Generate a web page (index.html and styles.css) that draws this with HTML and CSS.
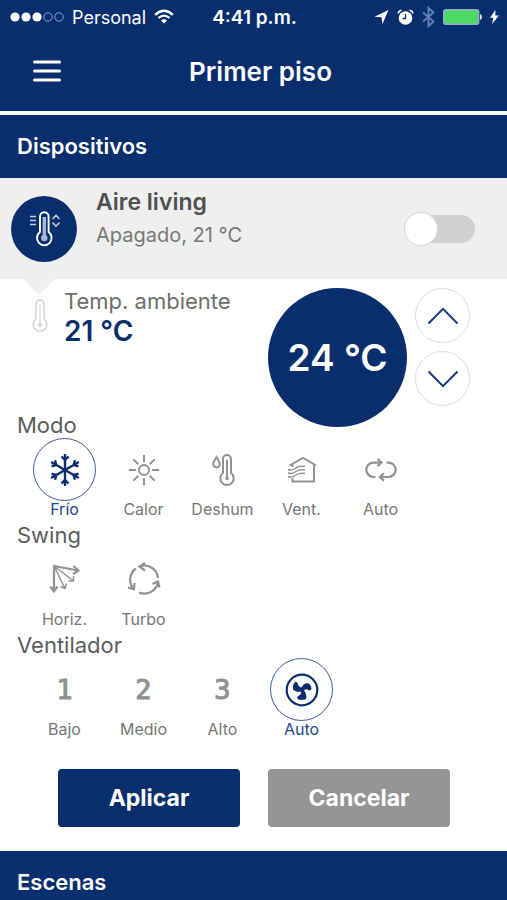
FILE: index.html
```html
<!DOCTYPE html>
<html lang="es">
<head>
<meta charset="utf-8">
<meta name="viewport" content="width=device-width, initial-scale=1">
<title>Primer piso</title>
<link rel="stylesheet" href="styles.css">
</head>
<body>
<div class="status">
  <div class="status-left">
    <svg width="54" height="12" viewBox="0 0 54 12" fill="#fff" aria-hidden="true"><circle cx="5" cy="6" r="4.6"/><circle cx="16" cy="6" r="4.6"/><circle cx="27" cy="6" r="4.6"/><g fill="none" stroke="#8fa3cb"><circle cx="38" cy="6" r="4.2"/><circle cx="49" cy="6" r="4.2"/></g></svg>
    <span>Personal</span>
    <svg width="20" height="16" viewBox="0 0 20 16" fill="none" stroke="#fff" stroke-width="2.3" aria-hidden="true"><path d="M1.2 5.8Q10-2.2 18.800 5.800M4.500 9Q10 4.200 15.500 9"/><path d="M10 14.500 7 11.500Q10 9.200 13 11.500Z" fill="#fff" stroke="none"/></svg>
  </div>
  <span class="clock">4:41 p.m.</span>
  <div class="status-right">
    <svg width="15" height="16" viewBox="0 0 15 16" fill="#fff" aria-hidden="true"><path d="M14.500 1 8.500 15 7.500 8.200.500 7.800Z"/></svg>
    <svg width="17" height="17" viewBox="0 0 17 17" aria-hidden="true"><circle cx="8.500" cy="9" r="6.800" fill="#fff"/><path d="M1.200 4.500Q1.500 1.500 4.500 1.200M15.800 4.500Q15.500 1.500 12.500 1.200" fill="none" stroke="#fff" stroke-width="1.500"/><path d="M8.500 5v4.500H5.500" fill="none" stroke="#092e6e" stroke-width="1.300"/></svg>
    <svg width="13" height="20" viewBox="0 0 13 20" fill="none" stroke="#667fb0" stroke-width="1.900" aria-hidden="true"><path d="M1 5.500 11.500 14.500 6.500 19V1L11.500 5.500 1 14.500"/></svg>
    <svg width="39" height="16" viewBox="0 0 39 16" aria-hidden="true"><rect x=".7" y=".7" width="35" height="14.600" rx="2" fill="#4cd964" stroke="#9aaccd" stroke-width="1.400"/><path d="M37 5q2 .500 2 3t-2 3z" fill="#dbe3f0"/></svg>
    <svg width="9" height="16" viewBox="0 0 9 16" fill="#fff" aria-hidden="true"><path d="M5.500 1 0 8.800h3.400L2 15l7-8.400H5.200Z"/></svg>
  </div>
</div>

<header class="header">
  <button class="menu" aria-label="Menú">
    <svg width="30" height="24" viewBox="0 0 30 24" stroke="#fff" stroke-width="3" stroke-linecap="round"><path d="M2.500 3h25M2.500 12h25M2.500 21h25"/></svg>
  </button>
  <h1>Primer piso</h1>
</header>

<main>
  <h2 class="bar">Dispositivos</h2>
  <section class="device">
    <div class="device-icon">
      <svg width="32" height="38" viewBox="0 0 32 38" fill="none" stroke="#fff" stroke-width="1.900" aria-hidden="true"><path d="M12 22V6.500a4.300 4.300 0 0 1 8.600 0V22a7.300 7.300 0 1 1-8.600 0Z"/><path d="M16.300 7v20" stroke="#a9b8d5" stroke-width="3.400"/><circle cx="16.300" cy="28" r="3.200" fill="#a9b8d5" stroke="none"/><g stroke="#c3cee1" stroke-width="1.600"><path d="M2 6.500h6M2 10.500h6M2 14.500h6M24.500 9 28 5.300 31.500 9M24.500 12.500 28 16.200 31.500 12.500"/></g></svg>
    </div>
    <div class="device-text">
      <h3>Aire living</h3>
      <p>Apagado, 21 °C</p>
    </div>
    <input class="switch" type="checkbox" role="switch" aria-label="Aire living">
  </section>

  <section class="temperature">
    <svg class="ambient-icon" width="16" height="34" viewBox="0 0 16 34" fill="none" stroke="#d3d3d3" stroke-width="1.500" aria-hidden="true"><path d="M4 20V5a4 4 0 0 1 8 0v15a6.800 6.800 0 1 1-8 0Z"/><path d="M8 6v20" stroke-width="1.300"/><circle cx="8" cy="26" r="2" fill="#d3d3d3" stroke="none"/></svg>
    <div class="ambient">
      <p>Temp. ambiente</p>
      <strong>21 °C</strong>
    </div>
    <output class="target">24 °C</output>
    <div class="stepper">
      <button aria-label="Subir"><svg width="32" height="18" viewBox="0 0 32 18"><path d="M1.500 16.500 16 1.800 30.500 16.500"/></svg></button>
      <button aria-label="Bajar"><svg width="32" height="18" viewBox="0 0 32 18"><path d="M1.500 1.500 16 16.200 30.500 1.500"/></svg></button>
    </div>
  </section>

  <section class="group">
    <h4>Modo</h4>
    <div class="options">
      <button class="option selected">
        <span class="disc"><svg width="34" height="34" viewBox="0 0 34 34" stroke-width="2.400"><defs><g id="arm"><path d="M17 17V1M13.500 3.500 17 7 20.500 3.500"/></g></defs><use href="#arm"/><use href="#arm" transform="rotate(60 17 17)"/><use href="#arm" transform="rotate(120 17 17)"/><use href="#arm" transform="rotate(180 17 17)"/><use href="#arm" transform="rotate(240 17 17)"/><use href="#arm" transform="rotate(300 17 17)"/></svg></span>
        <span class="caption">Frío</span>
      </button>
      <button class="option">
        <span class="disc"><svg width="32" height="32" viewBox="0 0 32 32" stroke-width="2"><circle cx="16" cy="16" r="5"/><path d="M16 1v7M16 24v7M1 16h7M24 16h7M5.400 5.400l4.900 4.900M21.700 21.700l4.900 4.900M5.400 26.600l4.900-4.900M21.700 10.300l4.900-4.900"/></svg></span>
        <span class="caption">Calor</span>
      </button>
      <button class="option">
        <span class="disc"><svg width="24" height="32" viewBox="0 0 24 32" stroke-width="2"><path d="M12 19V5a4 4 0 0 1 8 0v14a6.700 6.700 0 1 1-8 0Z"/><path d="M16 6v18" stroke-width="2"/><circle cx="16" cy="24.500" r="1.800" fill="currentColor" stroke="none"/><path d="M5.500 3C8 7 8.800 8.200 8.800 10a3.300 3.300 0 0 1-6.600 0C2.200 8.200 3.200 7 5.500 3Z"/></svg></span>
        <span class="caption">Deshum</span>
      </button>
      <button class="option">
        <span class="disc"><svg width="32" height="28" viewBox="0 0 32 28" stroke-width="2"><path d="M3.500 9.500 17 2l13 7.500M28 9v16.500H6.500V22M6.500 8v3"/><path stroke-width="1.500" d="M2 13.500c4 1.500 6 0 8-1.500s4-2 9-1.500M2 17c4 1.500 6 0 8-1.500s4-2 9-1.500M2 20.500c4 1.500 6 0 8-1.500s4-2 9-1.500"/></svg></span>
        <span class="caption">Vent.</span>
      </button>
      <button class="option">
        <span class="disc"><svg width="34" height="24" viewBox="0 0 34 24" stroke-width="2.200"><path d="M11.500 19H9.500a7.200 7.200 0 0 1 0-14.400h8M13.500 1l4 3.600-4 3.700M22.500 4.600h2a7.200 7.200 0 0 1 0 14.400h-8.500M20 15.300 16 19l4 3.600"/></svg></span>
        <span class="caption">Auto</span>
      </button>
    </div>
  </section>

  <section class="group">
    <h4>Swing</h4>
    <div class="options">
      <button class="option">
        <span class="disc"><svg width="32" height="32" viewBox="0 0 32 32" stroke-width="2.200"><path d="M5 27V2L29 6.500M1.500 22.500 5 27.300 8.500 22.500M24.500 2 29.500 6.500 24 10"/><path stroke-width="1.500" d="M5 2 24.500 17M5 2 16 24.500M19.500 17h5V12M11.500 22.500l4.500 2 1.500-5"/></svg></span>
        <span class="caption">Horiz.</span>
      </button>
      <button class="option">
        <span class="disc"><svg width="34" height="34" viewBox="0 0 34 34" stroke-width="2.200"><path d="M31 15A14 14 0 0 0 13 3M18-.2 12.500 3.500 18 7.500M9 5.500A14 14 0 0 0 6.500 26M1 24.500l6 1.800.500-6.300M12 29.500A14 14 0 0 0 31 19.500M25.500 21l5.500-2.500 1.500 6"/></svg></span>
        <span class="caption">Turbo</span>
      </button>
    </div>
  </section>

  <section class="group">
    <h4>Ventilador</h4>
    <div class="options">
      <button class="option"><span class="disc speed">1</span><span class="caption">Bajo</span></button>
      <button class="option"><span class="disc speed">2</span><span class="caption">Medio</span></button>
      <button class="option"><span class="disc speed">3</span><span class="caption">Alto</span></button>
      <button class="option selected">
        <span class="disc"><svg width="34" height="34" viewBox="0 0 34 34"><circle cx="17" cy="17" r="15.300" stroke-width="2.200"/><g fill="currentColor" stroke="none"><path d="M15.500 17C17 20 16 21.500 14 22.500c-2 1-2.500 3-1 3.800 2.500 1 6 .700 7.800-.300C22.200 24 21 20 18.800 17Z"/><path d="M18 18.500C15 19 11 19 8.300 17 7.500 14.500 8 11 9.800 9.300c1.500-.800 3 .200 3.200 2 .300 2 2 3 4 3.200Z"/><path d="M16 16c1-3 3-5.500 6.200-6 2.300.200 4.500 3.500 4.300 6-.500 1.500-2.500 1.800-3.700.800-1.300-1-3.300-.500-4.500 1.500Z"/></g></svg></span>
        <span class="caption">Auto</span>
      </button>
    </div>
  </section>

  <div class="actions">
    <button class="apply">Aplicar</button>
    <button class="cancel">Cancelar</button>
  </div>
  <h2 class="bar">Escenas</h2>
</main>
</body>
</html>
```
FILE: styles.css
```css
* { box-sizing: border-box; }

body {
  margin: 0;
  background: #fff;
  color: #5c5c5c;
  font-family: Inter, "Liberation Sans", sans-serif;
}

h1, h2, h3, h4, p { margin: 0; }

button {
  padding: 0;
  border: 0;
  background: none;
  color: inherit;
  font: inherit;
  cursor: pointer;
}

svg { display: block; overflow: visible; }

.status {
  display: grid;
  grid-template-columns: 1fr auto 1fr;
  align-items: center;
  height: 34px;
  padding: 0 8px 0 10px;
  background: #092e6e;
  color: #fff;
}

.status-left, .status-right { display: flex; align-items: center; gap: 8px; font-size: 18px; }
.status-right { justify-content: flex-end; }
.clock { font-size: 19px; font-weight: 600; }

.header {
  display: grid;
  grid-template-columns: 62px 1fr 62px;
  align-items: center;
  height: 77px;
  padding-bottom: 3px;
  background: #092e6e;
  color: #fff;
}

.header h1 { padding-left: 14px; font-size: 26px; font-weight: 600; text-align: center; }
.menu { justify-self: end; }

.bar {
  height: 67px;
  padding-left: 17px;
  border-top: 4px solid #fff;
  background: #092e6e;
  color: #fff;
  font-size: 22px;
  font-weight: 600;
  line-height: 63px;
}

.device {
  position: relative;
  display: flex;
  align-items: center;
  gap: 19px;
  height: 101px;
  padding: 0 32px 0 11px;
  background: #efefef;
}

.device::after {
  content: "";
  position: absolute;
  top: 100%;
  left: 23px;
  border: 16px solid transparent;
  border-top-color: #efefef;
  border-bottom: 0;
}

.device-icon {
  display: grid;
  flex: none;
  place-items: center;
  width: 66px;
  height: 66px;
  border-radius: 50%;
  background: #092e6e;
}

.device-text { flex: 1; padding-bottom: 22px; }
.device-text h3 { color: #505050; font-size: 23px; font-weight: 600; line-height: 34px; }
.device-text p { color: #777; font-size: 20px; line-height: 32px; }

.switch {
  appearance: none;
  flex: none;
  display: flex;
  align-items: center;
  width: 68px;
  height: 28px;
  margin: 0;
  border-radius: 14px;
  background: #d1d1d1;
}

.switch::before {
  content: "";
  flex: none;
  width: 32px;
  height: 32px;
  margin-left: -3px;
  border: 1px solid #d5d5d5;
  border-radius: 50%;
  background: #fff;
}

.switch:checked { justify-content: flex-end; background: #092e6e; }

.temperature {
  display: flex;
  align-items: flex-start;
  height: 133px;
  padding: 9px 37px 0 32px;
}

.ambient-icon { flex: none; margin-top: 11px; }
.ambient { flex: 1; padding-left: 16px; white-space: nowrap; }
.ambient p { color: #6e6e6e; font-size: 22px; line-height: 27px; }
.ambient strong { display: block; color: #092e6e; font-size: 28px; font-weight: 600; line-height: 32px; }

.target {
  display: grid;
  flex: none;
  place-items: center;
  width: 139px;
  height: 139px;
  border-radius: 50%;
  background: #092e6e;
  color: #fff;
  font-size: 37px;
  font-weight: 600;
}

.stepper { display: grid; flex: none; gap: 8px; padding-left: 8px; }

.stepper button {
  display: grid;
  place-items: center;
  width: 55px;
  height: 55px;
  border: 1px solid #ddd;
  border-radius: 50%;
}

.stepper svg { fill: none; stroke: #153a80; stroke-width: 2; }

.group { height: 110px; }
.group h4 { padding-left: 17px; font-size: 22px; font-weight: 400; line-height: 26px; }

.options {
  display: grid;
  grid-template-columns: repeat(5, minmax(0, 79px));
  padding-left: 25px;
}

.option { display: grid; justify-items: center; color: #929292; }

.disc {
  display: grid;
  place-items: center;
  width: 63px;
  height: 63px;
  border: 1px solid transparent;
  border-radius: 50%;
}

.disc svg { fill: none; stroke: currentColor; }

.speed {
  font-family: "DejaVu Sans Mono", monospace;
  font-size: 27px;
  -webkit-text-stroke: 1px currentColor;
}

.caption { color: #777; font-size: 16px; line-height: 16px; }
.selected { color: #092e6e; }
.selected .disc { border-color: #3e5c97; }
.selected .caption { color: #23458c; }

.actions { display: flex; gap: 28px; padding: 27px 57px 20px 58px; }

.actions button {
  flex: 1;
  height: 58px;
  border-radius: 4px;
  color: #fff;
  font-size: 23px;
  font-weight: 700;
}

.actions .apply { background: #092e6e; }
.actions .cancel { background: #959595; }
```
